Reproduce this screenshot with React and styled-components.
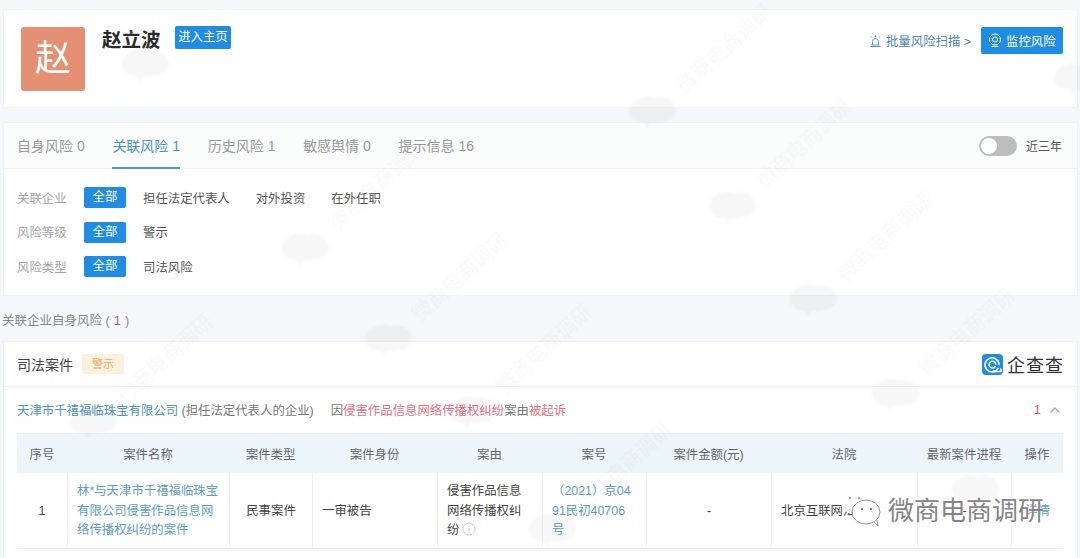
import React from "react";
import styled, { createGlobalStyle } from "styled-components";
import { ChevronUp } from "lucide-react";

const Global = createGlobalStyle`
	html, body {
		margin: 0;
		padding: 0;
		background: #f5f8fa;
	}
	body {
		font-family: "Liberation Sans", "Noto Sans CJK SC", sans-serif;
		color: #333;
	}
	* {
		box-sizing: border-box;
	}
`;

//Styled components
const Page = styled.div`
	position: relative;
	width: 1080px;
	height: 558px;
	overflow: hidden;
	padding: 9px 2px 0 3px;
`;

const Card = styled.section`
	background: #fff;
	border: 1px solid #f0f3f5;
`;

const HeaderCard = styled(Card)`
	height: 99px;
	display: flex;
	padding: 17px 14px 0 17px;
`;

const Avatar = styled.div`
	width: 64px;
	height: 64px;
	border-radius: 3px;
	background: #e58f73;
	color: #fff;
	font-size: 36px;
	line-height: 64px;
	text-align: center;
`;

const Name = styled.h1`
	margin: 0 0 0 17px;
	font-size: 19.5px;
	line-height: 26px;
	font-weight: 700;
	color: #2b2b2b;
`;

const HomeLink = styled.a`
	height: 23px;
	margin: -1px 0 0 14px;
	padding: 0 3.7px;
	border-radius: 2px;
	background: #1f8ce6;
	color: #fff;
	font-size: 12.4px;
	line-height: 22px;
`;

const HeaderActions = styled.div`
	margin-left: auto;
	display: flex;
	align-items: flex-start;
	gap: 10px;
	font-size: 12.4px;
`;

const ScanLink = styled.a`
	display: flex;
	align-items: center;
	gap: 4px;
	height: 27px;
	color: #4a87b8;
`;

const MonitorButton = styled.a`
	display: flex;
	align-items: center;
	gap: 4px;
	width: 82px;
	height: 27px;
	padding-left: 7px;
	border-radius: 2px;
	background: #1f8ce6;
	color: #fff;
`;

const FilterCard = styled(Card)`
	height: 174px;
	margin-top: 14px;
`;

const TabBar = styled.div`
	height: 46px;
	display: flex;
	align-items: stretch;
	gap: 27.7px;
	padding: 0 15px 0 13px;
	background: #fbfcfc;
	border-bottom: 1px solid #eff2f5;
`;

const Tab = styled.div`
	height: 46px;
	font-size: 14px;
	line-height: 47px;
	color: ${(p) => (p.$active ? "#4a93c4" : "#999")};
	border-bottom: 2px solid ${(p) => (p.$active ? "#4a9cc9" : "transparent")};
	white-space: nowrap;
`;

const RangeBox = styled.div`
	margin-left: auto;
	display: flex;
	align-items: center;
	gap: 9px;
	font-size: 12px;
	color: #555;
`;

const Toggle = styled.div`
	width: 38px;
	height: 20px;
	border-radius: 10px;
	background: #bdbdbd;
	padding: 2px;

	&::before {
		content: "";
		display: block;
		width: 16px;
		height: 16px;
		border-radius: 50%;
		background: #fff;
	}
`;

const FilterRows = styled.div`
	display: flex;
	flex-direction: column;
	gap: 13.5px;
	padding: 18px 0 0 13px;
`;

const FilterRow = styled.div`
	display: flex;
	align-items: center;
	height: 21px;
	font-size: 12.4px;
`;

const FilterLabel = styled.span`
	width: 67px;
	color: #a5a5a5;
`;

const Chip = styled.span`
	width: 42px;
	height: 21px;
	margin-right: 17px;
	border-radius: 2px;
	background: #1f8ce6;
	color: #fff;
	line-height: 21px;
	text-align: center;
`;

const Option = styled.span`
	margin-right: 26px;
	color: #555;
`;

const SectionTitle = styled.div`
	height: 45px;
	margin-left: -1px;
	font-size: 12.5px;
	line-height: 50px;
	color: #888;
`;

const RedCount = styled.span`
	color: #d9534f;
	font-size: 13px;
	margin: 0 4px;
`;

const CaseCard = styled(Card)`
	height: 232px;
`;

const CaseHead = styled.div`
	height: 45px;
	display: flex;
	align-items: center;
	padding: 0 13px 0 13px;
	border-bottom: 1px solid #eff2f5;
`;

const CaseTitle = styled.span`
	font-size: 14px;
	color: #444;
`;

const WarnTag = styled.span`
	margin-left: 9px;
	padding: 0 10px;
	height: 20px;
	border-radius: 2px;
	background: #fdf0df;
	color: #f0a860;
	font-size: 11px;
	line-height: 20px;
`;

const Brand = styled.div`
	margin-left: auto;
	display: flex;
	align-items: center;
	gap: 4px;
	font-size: 18px;
	letter-spacing: 1px;
	color: #333;
`;

const CompanyRow = styled.div`
	height: 46px;
	display: flex;
	align-items: center;
	padding: 0 14px 1px 13px;
	font-size: 12.4px;
	color: #777;
`;

const CompanyName = styled.span`
	color: #4a93c4;
`;

const Cause = styled.span`
	margin-left: 17px;
`;

const Red = styled.span`
	color: #e8707f;
`;

const Count = styled.span`
	margin-left: auto;
	color: #d9534f;
	display: flex;
	align-items: center;
	gap: 6px;

	svg {
		color: #aaa;
	}
`;

const Table = styled.div`
	margin-left: 13px;
	width: 1046px;
	display: grid;
	grid-template-columns: 50px 162px 83px 125px 105px 104px 125px 146px 94px 52px;
	grid-template-rows: 40px 76px;
	font-size: 12.4px;
`;

const Th = styled.div`
	background: #ecf5fa;
	border-top: 1px solid #e4eef3;
	color: #666;
	display: flex;
	align-items: center;
	justify-content: center;
`;

const Td = styled.div`
	display: flex;
	align-items: center;
	justify-content: ${(p) => (p.$center ? "center" : "flex-start")};
	padding: 2px ${(p) => p.$padRight || (p.$center ? "0" : "9px")} 0 ${(p) => (p.$center ? "0" : "9px")};
	line-height: 19.5px;
	color: ${(p) => (p.$link ? "#5b9dc9" : "#444")};
	border-bottom: 1px solid #eceff2;
	border-left: ${(p) => (p.$first ? "none" : "1px solid #eff2f5")};
	overflow: hidden;
	word-break: ${(p) => (p.$breakAll ? "break-all" : "normal")};
	white-space: ${(p) => (p.$nowrap ? "nowrap" : "normal")};
`;

const Watermark = styled.div`
	position: absolute;
	left: 840px;
	top: 490px;
	display: flex;
	align-items: center;
	gap: 6px;
	font-size: 26px;
	color: #858585;
	text-shadow: 0 0 2px #fff;
`;

const FaintBlob = styled.svg`
	position: absolute;
	filter: blur(1px);
	pointer-events: none;
`;

const FaintText = styled.span`
	position: absolute;
	width: 130px;
	font-size: 20px;
	font-weight: 700;
	white-space: nowrap;
	color: rgba(90, 100, 110, 0.03);
	filter: blur(0.5px);
	transform: rotate(-42deg);
	pointer-events: none;
`;

const blobs = [
	[120, 48], [627, 95], [707, 190], [788, 283], [280, 232], [1052, 62],
	[363, 323], [447, 395], [870, 378], [950, 473], [527, 513], [68, 405],
];

// the faint marks that would run off the page are left out
const marks = [
	[627, 95], [707, 190], [788, 283], [280, 232],
	[363, 323], [447, 395], [870, 378], [527, 513], [68, 405],
];

const columns = ["序号", "案件名称", "案件类型", "案件身份", "案由", "案号", "案件金额(元)", "法院", "最新案件进程", "操作"];

function AlarmIcon() {
	return (
		<svg width="13" height="14" viewBox="0 0 13 14" fill="none" stroke="#5a9bc8" strokeWidth="1">
			<path d="M3.500 11V7.500a3 3 0 0 1 6 0V11" />
			<path d="M1.500 12.500h10M2.500 11h8M6.500 1v2M2 2.500l1.200 1.200M11 2.500L9.800 3.700" />
		</svg>
	);
}

function CameraIcon() {
	return (
		<svg width="14" height="15" viewBox="0 0 14 15" fill="none" stroke="#fff" strokeWidth="1">
			<circle cx="7" cy="6.500" r="5.500" />
			<circle cx="7" cy="6.500" r="2.500" />
			<path d="M3.500 13.500h7" />
		</svg>
	);
}

function BrandLogo() {
	return (
		<svg width="21" height="21" viewBox="0 0 21 21" fill="none">
			<rect width="21" height="21" rx="4" fill="#1f8ce6" />
			<path d="M16 14.500a7 7 0 1 1 1-4" stroke="#fff" strokeWidth="1.600" strokeLinecap="round" />
			<path d="M13.300 12.500a3.400 3.400 0 1 1 .5-2.500" stroke="#fff" strokeWidth="1.400" strokeLinecap="round" />
			<path d="M10.500 17.500H19v-3" stroke="#fff" strokeWidth="1.600" />
		</svg>
	);
}

function ChatIcon() {
	return (
		<svg width="42" height="37" viewBox="0 0 42 37">
			<ellipse cx="14" cy="13" rx="13" ry="11" fill="#fff" fillOpacity="0.85" />
			<circle cx="10" cy="8" r="1" fill="#888" />
			<circle cx="19" cy="8" r="1" fill="#888" />
			<ellipse cx="26" cy="22" rx="14" ry="12" fill="#fff" stroke="#999" />
			<path d="M34 32l4 4-1-6" fill="#fff" stroke="#999" />
			<circle cx="22" cy="19" r="1.100" fill="#666" />
			<circle cx="31" cy="19" r="1.100" fill="#666" />
		</svg>
	);
}

function InfoIcon() {
	return (
		<svg width="14" height="14" viewBox="0 0 14 14" fill="none" stroke="#ccc" style={{ verticalAlign: "-2px", marginLeft: 3 }}>
			<circle cx="7" cy="7" r="6" />
			<path d="M7 6v4M7 4v1" />
		</svg>
	);
}

//JSX
export default function App() {
	return (
		<Page>
			<Global />
			<HeaderCard>
				<Avatar>赵</Avatar>
				<Name>赵立波</Name>
				<HomeLink>进入主页</HomeLink>
				<HeaderActions>
					<ScanLink>
						<AlarmIcon />
						批量风险扫描 &gt;
					</ScanLink>
					<MonitorButton>
						<CameraIcon />
						监控风险
					</MonitorButton>
				</HeaderActions>
			</HeaderCard>

			<FilterCard>
				<TabBar>
					<Tab>自身风险 0</Tab>
					<Tab $active>关联风险 1</Tab>
					<Tab>历史风险 1</Tab>
					<Tab>敏感舆情 0</Tab>
					<Tab>提示信息 16</Tab>
					<RangeBox>
						<Toggle />
						近三年
					</RangeBox>
				</TabBar>
				<FilterRows>
					<FilterRow>
						<FilterLabel>关联企业</FilterLabel>
						<Chip>全部</Chip>
						<Option>担任法定代表人</Option>
						<Option>对外投资</Option>
						<Option>在外任职</Option>
					</FilterRow>
					<FilterRow>
						<FilterLabel>风险等级</FilterLabel>
						<Chip>全部</Chip>
						<Option>警示</Option>
					</FilterRow>
					<FilterRow>
						<FilterLabel>风险类型</FilterLabel>
						<Chip>全部</Chip>
						<Option>司法风险</Option>
					</FilterRow>
				</FilterRows>
			</FilterCard>

			<SectionTitle>
				关联企业自身风险 (<RedCount>1</RedCount>)
			</SectionTitle>

			<CaseCard>
				<CaseHead>
					<CaseTitle>司法案件</CaseTitle>
					<WarnTag>警示</WarnTag>
					<Brand>
						<BrandLogo />
						企查查
					</Brand>
				</CaseHead>
				<CompanyRow>
					<CompanyName>天津市千禧福临珠宝有限公司</CompanyName>
					&nbsp;(担任法定代表人的企业)
					<Cause>
						因<Red>侵害作品信息网络传播权纠纷</Red>案由<Red>被起诉</Red>
					</Cause>
					<Count>
						1
						<ChevronUp size={16} />
					</Count>
				</CompanyRow>
				<Table>
					{columns.map((c) => (
						<Th key={c}>{c}</Th>
					))}
					<Td $center $first>1</Td>
					<Td $link>林*与天津市千禧福临珠宝有限公司侵害作品信息网络传播权纠纷的案件</Td>
					<Td $center>民事案件</Td>
					<Td>一审被告</Td>
					<Td $padRight="18px">
						<span>
							侵害作品信息网络传播权纠纷
							<InfoIcon />
						</span>
					</Td>
					<Td $link $breakAll $padRight="12px">（2021）京0491民初40706号</Td>
					<Td $center>-</Td>
					<Td $nowrap>北京互联网法院</Td>
					<Td $center>-</Td>
					<Td $link $center>详情</Td>
				</Table>
			</CaseCard>

			{blobs.map(([x, y]) => (
				<FaintBlob key={`${x}-${y}`} width="50" height="36" viewBox="0 0 50 36" style={{ left: x, top: y }}>
					<path d="M8 26C0 22 0 9 9 6c3-5 13-6 18-3 8-3 19 1 21 9 3 8-3 15-12 15-5 1-9 1-13 1l-3 6-3-6c-3 0-6-1-9-2z" fill="#5a646e" fillOpacity="0.05" />
				</FaintBlob>
			))}
			{marks.map(([x, y]) => (
				<FaintText key={`${x}-${y}`} aria-hidden="true" style={{ left: x + 35, top: y - 65 }}>微商电商调研</FaintText>
			))}
			<Watermark>
				<ChatIcon />
				微商电商调研
			</Watermark>
		</Page>
	);
}
